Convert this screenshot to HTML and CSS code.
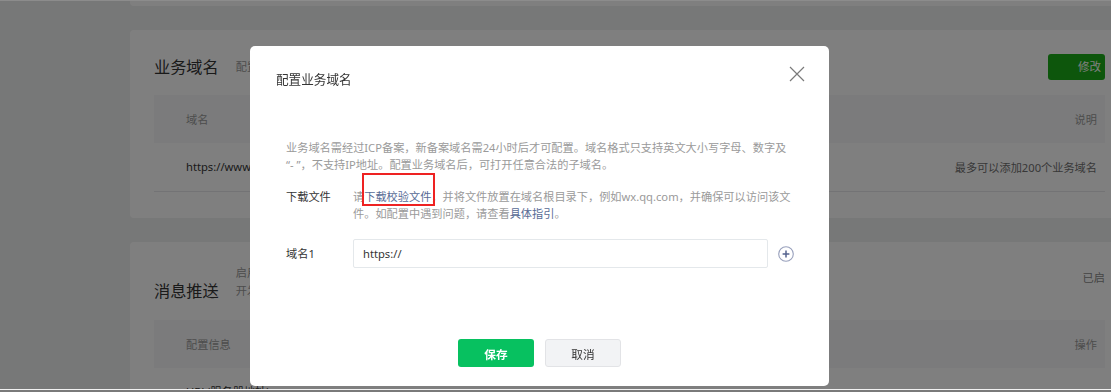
FILE: index.html
```html
<!DOCTYPE html>
<html lang="zh-CN">
<head>
    <meta charset="UTF-8">
    <meta name="viewport" content="width=device-width, initial-scale=1.0">
    <title>开发设置</title>
    <link rel="stylesheet" href="styles.css">
</head>
<body>

    <!-- Página de fundo -->
    <div class="page">
        <div class="card card-cut"></div>

        <div class="card">
            <div class="card-hd">
                <h3 class="card-title">业务域名</h3>
                <p class="card-desc">配置业务域名后，可在网页中打开</p>
                <a href="#" class="btn-edit">修改</a>
            </div>
            <table class="table">
                <thead>
                    <tr><th>域名</th><th class="right">说明</th></tr>
                </thead>
                <tbody>
                    <tr><td>https://www.example.com</td><td class="right note">最多可以添加200个业务域名</td></tr>
                </tbody>
            </table>
        </div>

        <div class="card card-push">
            <div class="card-hd tall">
                <h3 class="card-title">消息推送</h3>
                <p class="card-desc">启用并设置服务器配置后，用户消息将转发到该URL<br>开发者可以通过接口回复用户消息</p>
                <span class="status">已启</span>
            </div>
            <table class="table">
                <thead>
                    <tr><th>配置信息</th><th class="right">操作</th></tr>
                </thead>
                <tbody>
                    <tr><td>URL(服务器地址)</td><td></td></tr>
                </tbody>
            </table>
        </div>
    </div>

    <!-- Máscara e diálogo -->
    <div class="mask"></div>

    <div class="dialog">
        <div class="dialog-hd">
            <h3 class="dialog-title">配置业务域名</h3>
            <a href="#" class="dialog-close">
                <svg width="16" height="16" viewBox="0 0 16 16"><path d="M1 1l14 14M15 1L1 15" stroke="#7a7a7a" stroke-width="1.2" fill="none"/></svg>
            </a>
        </div>
        <div class="dialog-bd">
            <p class="tips">业务域名需经过ICP备案，新备案域名需24小时后才可配置。域名格式只支持英文大小写字母、数字及<br>“- ”，不支持IP地址。配置业务域名后，可打开任意合法的子域名。</p>

            <div class="form-row">
                <label class="form-label">下载文件</label>
                <div class="form-ctrl">
                    请<a href="#" class="link">下载校验文件</a>，并将文件放置在域名根目录下，例如wx.qq.com，并确保可以访问该文<br>件。如配置中遇到问题，请查看<a href="#" class="link">具体指引</a>。
                    <span class="mark"></span>
                </div>
            </div>

            <div class="form-row field">
                <label class="form-label">域名1</label>
                <input type="text" class="input" value="https://">
                <a href="#" class="add">
                    <svg width="16" height="16" viewBox="0 0 16 16"><circle cx="8" cy="8" r="7.3" fill="none" stroke="#98a0bc" stroke-width="1.1"/><path d="M8 4.6v6.8M4.6 8h6.8" stroke="#56638f" stroke-width="1.5" fill="none"/></svg>
                </a>
            </div>
        </div>
        <div class="dialog-ft">
            <button class="btn btn-primary">保存</button>
            <button class="btn btn-default">取消</button>
        </div>
    </div>

    <div class="screen-top"></div>
    <div class="screen-edge"></div>

</body>
</html>
```

FILE: styles.css
```css
* {
    box-sizing: border-box;
    margin: 0;
    padding: 0;
}

body {
    font-family: "Noto Sans", "Noto Sans CJK SC", sans-serif;
    font-size: 11.2px;
    color: #353535;
    background-color: #eff0f0;
    overflow: hidden;
}

/* Página de fundo */
.page {
    padding-left: 130px;
    width: 1129px;
}

.card {
    width: 999px;
    background-color: #fff;
    border-radius: 4px;
    padding: 24px 24px 26px;
    margin-bottom: 24px;
}

.card-cut {
    height: 6px;
    padding: 0;
    border-radius: 0 0 4px 4px;
}

.card-push {
    padding-top: 22px;
}

.card-hd {
    display: flex;
    align-items: center;
    height: 26px;
    margin-bottom: 15px;
}

.card-hd.tall {
    height: 36px;
    align-items: flex-end;
    margin-bottom: 20px;
}

.card-title {
    font-size: 16.2px;
    font-weight: normal;
    line-height: 26px;
    margin-right: 17px;
}

.card-hd.tall .card-title {
    line-height: 18px;
}

.card-desc {
    flex: 1;
    color: #9a9a9a;
    line-height: 18px;
}

.btn-edit {
    width: 57px;
    height: 26px;
    line-height: 26px;
    background-color: #1aad19;
    color: #fff;
    border-radius: 3px;
    text-align: right;
    padding-right: 4px;
    text-decoration: none;
    font-size: 11.5px;
}

.status {
    align-self: flex-start;
    margin-top: 5px;
    line-height: 18px;
    color: #8a8a8a;
}

.table {
    width: 100%;
    border-collapse: collapse;
}

.table th {
    height: 48px;
    background-color: #f6f7f8;
    font-weight: normal;
    color: #9a9a9a;
    text-align: left;
    padding: 0 8px 0 32px;
}

.table td {
    height: 48px;
    border-bottom: 1px solid #e7e7eb;
    padding: 0 8px 0 32px;
}

.table .right {
    text-align: right;
}

.table .note {
    color: #707070;
}

/* Máscara */
.mask {
    position: fixed;
    top: 0;
    left: 0;
    right: 0;
    bottom: 0;
    background-color: rgba(0, 0, 0, 0.5);
}

/* Diálogo */
.dialog {
    position: fixed;
    left: 250px;
    top: 46px;
    width: 579px;
    height: 340px;
    background-color: #fff;
    border-radius: 5px;
    display: flex;
    flex-direction: column;
}

.dialog-hd {
    position: relative;
    padding: 24px 26px 0;
}

.dialog-title {
    font-size: 12.6px;
    font-weight: normal;
    line-height: 20px;
    color: #353535;
}

.dialog-close {
    position: absolute;
    right: 24px;
    top: 20px;
    width: 16px;
    height: 16px;
    display: block;
}

.dialog-close svg {
    display: block;
}

.dialog-bd {
    padding: 49px 33px 0 36px;
}

.tips {
    color: #9a9a9a;
    line-height: 17px;
    white-space: nowrap;
}

.form-row {
    display: flex;
    margin-top: 15px;
}

.form-row.field {
    align-items: center;
    margin-top: 17px;
}

.form-label {
    width: 67px;
    flex: none;
    line-height: 17px;
    color: #353535;
}

.form-ctrl {
    position: relative;
    color: #9a9a9a;
    line-height: 17px;
    white-space: nowrap;
}

.link {
    color: #576b95;
    text-decoration: none;
}

/* marcação vermelha da captura */
.mark {
    position: absolute;
    left: 9px;
    top: -15px;
    width: 73px;
    height: 33px;
    border: 2px solid #ee2222;
}

.input {
    width: 415px;
    height: 29px;
    border: 1px solid #e4e8eb;
    border-radius: 2px;
    padding: 0 9px;
    font-family: inherit;
    font-size: 11.2px;
    color: #353535;
    outline: none;
}

.add {
    display: block;
    margin-left: 10px;
    height: 16px;
}

.add svg {
    display: block;
}

.dialog-ft {
    margin-top: auto;
    display: flex;
    justify-content: center;
    gap: 11px;
    padding-bottom: 19px;
}

.btn {
    width: 76px;
    height: 28px;
    border-radius: 3px;
    font-family: inherit;
    font-size: 11.7px;
    cursor: pointer;
}

.btn-primary {
    background-color: #07c160;
    color: #fff;
    border: none;
    font-weight: bold;
}

.btn-default {
    background-color: #f2f3f5;
    color: #353535;
    border: 1px solid #e2e3e6;
}

/* bordas da janela */
.screen-top {
    position: fixed;
    top: 0;
    left: 0;
    right: 0;
    height: 1px;
    background-color: #8c8c8c;
}

.screen-edge {
    position: fixed;
    left: 0;
    right: 0;
    bottom: 0;
    height: 3px;
    border-top: 1px solid #f2f2f2;
    background-color: #7a7a7a;
}
```
